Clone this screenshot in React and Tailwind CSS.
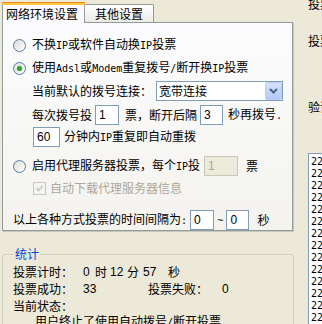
import React from 'react';

const cjk = "font-['Noto_Sans_CJK_SC']";
const num = "font-['Liberation_Sans']";

// half-width latin inside Chinese labels, SimSun style
const L = ({children}) => (
    <span className="font-['DejaVu_Sans_Mono'] text-[10px]">{children}</span>
);

const Radio = ({checked}) => (
    <div className="w-[13px] h-[13px] shrink-0 rounded-full border border-[#5B7A9D] bg-gradient-to-br from-[#DCDCD7] to-white flex items-center justify-center">
        {checked && <div className="w-[5px] h-[5px] rounded-full bg-[#2FA42F] shadow-[0_0_1px_#7ED07E]" />}
    </div>
);

const Edit = ({value, className = "", disabled = false}) => (
    <div className={`h-[20px] shrink-0 border flex items-center pl-[3px] ${num} text-[12px] ${disabled ? "border-[#C9C7BA] bg-[#EBEADB] text-[#ACA899]" : "border-[#7F9DB9] bg-white text-black"} ${className}`}>
        {value}
    </div>
);

const Tabs = () => (
    <div className="flex items-end h-[21px]">
        <div className="relative z-10 w-[83px] h-[21px] mb-[-1px] border-x border-[#919B9C] bg-[#FCFCFE] flex flex-col">
            <div className="h-[3px] border-t border-[#E68B2C] bg-[#FFC83C] -mx-[1px]" />
            <div className="flex-1 flex items-center pl-[3px] leading-[12px]">网络环境设置</div>
        </div>
        <div className="w-[69px] h-[18px] border border-b-0 border-l-0 border-[#919B9C] bg-gradient-to-b from-white to-[#ECEBE6] flex items-center pl-[10px] leading-[12px] rounded-tr-[2px]">
            其他设置
        </div>
    </div>
);

const Panel = () => (
    <div className="w-[291px] h-[219px] border border-[#919B9C] bg-gradient-to-b from-[#FCFCFE] to-[#F4F3EE] flex flex-col leading-[12px] shadow-[1px_1px_0_#C9C7BA]">
        <div className="flex items-center h-[20px] mt-[12px] ml-[10px] gap-[6px]">
            <Radio />
            <span>不换<L>IP</L>或软件自动换<L>IP</L>投票</span>
        </div>
        <div className="flex items-center h-[20px] mt-[3px] ml-[10px] gap-[6px]">
            <Radio checked />
            <span>使用<L>Adsl</L>或<L>Modem</L>重复拨号<L>/</L>断开换<L>IP</L>投票</span>
        </div>
        <div className="flex items-center h-[20px] mt-[3px] ml-[29px]">
            <span>当前默认的拨号连接：</span>
            <div className="ml-[4px] w-[127px] h-[20px] border border-[#7F9DB9] bg-white flex items-center">
                <span className="flex-1 pl-[2px]">宽带连接</span>
                <div className="w-[17px] h-[18px] rounded-[2px] border border-[#B9CDF6] bg-gradient-to-b from-[#D6E2FC] to-[#B3C8F5] flex items-center justify-center">
                    <svg width="9" height="6" viewBox="0 0 9 6">
                        <path d="M1 1 L4.5 4.5 L8 1" stroke="#4D6185" strokeWidth="2" fill="none" />
                    </svg>
                </div>
            </div>
        </div>
        <div className="flex items-center h-[20px] mt-[4px] ml-[29px]">
            <span>每次拨号投</span>
            <Edit value="1" className="ml-[3px] w-[24px]" />
            <span className="ml-[6px]">票，断开后隔</span>
            <Edit value="3" className="ml-[3px] w-[23px]" />
            <span className="ml-[5px]">秒再拨号<L>.</L></span>
        </div>
        <div className="flex items-center h-[20px] mt-[2px] ml-[30px]">
            <Edit value="60" className="w-[27px]" />
            <span className="ml-[4px]">分钟内<L>IP</L>重复即自动重拨</span>
        </div>
        <div className="flex items-center h-[20px] mt-[9px] ml-[10px]">
            <Radio />
            <span className="ml-[6px]">启用代理服务器投票，每个<L>IP</L>投</span>
            <Edit value="1" disabled className="ml-[4px] w-[34px]" />
            <span className="ml-[8px]">票</span>
        </div>
        <div className="flex items-center h-[20px] mt-[2px] ml-[30px] text-[#ACA899]">
            <div className="w-[13px] h-[13px] border border-[#CAC8BB] bg-[#F4F4F0] flex items-center justify-center">
                <svg width="9" height="9" viewBox="0 0 9 9">
                    <path d="M1.5 4 L3.5 6.5 L7.5 2" stroke="#CAC8BB" strokeWidth="1.6" fill="none" />
                </svg>
            </div>
            <span className="ml-[4px]">自动下载代理服务器信息</span>
        </div>
        <div className="flex items-center h-[20px] mt-[12px] ml-[10px]">
            <span>以上各种方式投票的时间间隔为<L>:</L></span>
            <Edit value="0" className="ml-[3px] w-[24px]" />
            <span className={`ml-[3px] ${num} text-[11px]`}>~</span>
            <Edit value="0" className="ml-[3px] w-[23px]" />
            <span className="ml-[8px]">秒</span>
        </div>
    </div>
);

const Stats = () => (
    <fieldset className="mt-[17px] w-[292px] border border-[#D0D0BF] rounded-[3px] pl-[10px] pb-[20px] leading-[12px]">
        <legend className="ml-[1px] px-[1px] text-[#0046D5]">统计</legend>
        <div className="flex items-center h-[17px] mt-[3px]">
            <span className="w-[70px]">投票计时：</span>
            <span className={`w-[12px] ${num}`}>0</span>
            <span className="w-[15px]">时</span>
            <span className={`w-[17px] ${num}`}>12</span>
            <span className="w-[16px]">分</span>
            <span className={`w-[25px] ${num}`}>57</span>
            <span>秒</span>
        </div>
        <div className="flex items-center h-[17px]">
            <span className="w-[70px]">投票成功：</span>
            <span className={`w-[65px] ${num}`}>33</span>
            <span className="w-[74px]">投票失败：</span>
            <span className={num}>0</span>
        </div>
        <div className="flex items-center h-[17px]">
            <span>当前状态：</span>
        </div>
        <div className="flex items-center h-[15px] pl-[22px] whitespace-nowrap">
            <span>用户终止了使用自动拨号<L>/</L>断开投票<L>.</L></span>
        </div>
    </fieldset>
);

const logRows = [
    "22:41:05 拨号成功", "22:41:08 投票成功", "22:41:12 断开连接", "22:41:15 重新拨号",
    "22:41:19 拨号成功", "22:41:22 投票成功", "22:41:26 断开连接", "22:41:29 重新拨号",
    "22:41:33 拨号成功", "22:41:36 投票成功", "22:41:40 断开连接", "22:41:43 重新拨号",
    "22:41:47 拨号成功", "22:41:50 投票成功",
];

export default function App() {
    return (
        <div className={`w-[322px] h-[324px] overflow-hidden bg-[#ECE9D8] flex ${cjk} text-[12px] text-black`}>
            <div className="w-[295px] shrink-0 pl-[2px] pt-[2px] flex flex-col">
                <Tabs />
                <Panel />
                <Stats />
            </div>
            <div className="flex-1 min-w-0 overflow-hidden pl-[13px] flex flex-col leading-[12px] whitespace-nowrap">
                <div className="mt-[-2px]">投票网址：</div>
                <div className="mt-[25px]">投票次数：</div>
                <div className="mt-[54px]">验证码：</div>
                <div className="mt-[40px] w-[120px] border border-[#7F9DB9] bg-white pt-[2px] pl-[2px] font-['DejaVu_Sans_Mono'] text-[10px]">
                    {logRows.map((r, i) => (
                        <div key={i} className="h-[12px] leading-[12px]">{r}</div>
                    ))}
                </div>
            </div>
        </div>
    );
}
